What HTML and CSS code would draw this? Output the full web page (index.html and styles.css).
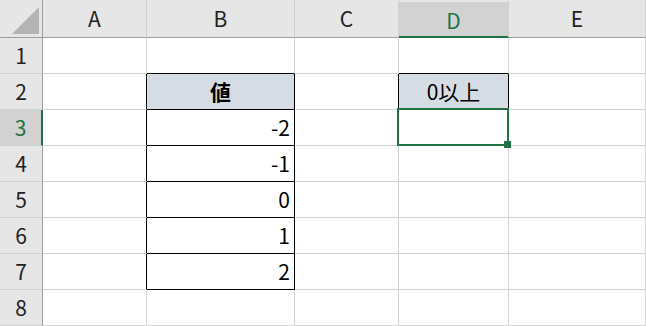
FILE: index.html
```html
<!DOCTYPE html>
<html lang="ja">
<head>
    <meta charset="UTF-8">
    <title>Sheet</title>
    <link rel="stylesheet" href="styles.css">
</head>
<body>
    <div class="sheet">
        <!-- column headers -->
        <div class="hd corner"><span class="tri"></span></div>
        <div class="hd">A</div>
        <div class="hd">B</div>
        <div class="hd">C</div>
        <div class="hd active-col">D</div>
        <div class="hd">E</div>

        <!-- row 1 -->
        <div class="rh">1</div>
        <div class="c"></div>
        <div class="c blk-b"></div>
        <div class="c"></div>
        <div class="c blk-b"></div>
        <div class="c"></div>

        <!-- row 2 -->
        <div class="rh">2</div>
        <div class="c blk-r"></div>
        <div class="c box head bold">値</div>
        <div class="c blk-r"></div>
        <div class="c box head">0以上</div>
        <div class="c"></div>

        <!-- row 3 -->
        <div class="rh active-row">3</div>
        <div class="c blk-r"></div>
        <div class="c box num">-2</div>
        <div class="c"></div>
        <div class="c current"><span class="handle"></span></div>
        <div class="c"></div>

        <!-- row 4 -->
        <div class="rh">4</div>
        <div class="c blk-r"></div>
        <div class="c box num">-1</div>
        <div class="c"></div>
        <div class="c"></div>
        <div class="c"></div>

        <!-- row 5 -->
        <div class="rh">5</div>
        <div class="c blk-r"></div>
        <div class="c box num">0</div>
        <div class="c"></div>
        <div class="c"></div>
        <div class="c"></div>

        <!-- row 6 -->
        <div class="rh">6</div>
        <div class="c blk-r"></div>
        <div class="c box num">1</div>
        <div class="c"></div>
        <div class="c"></div>
        <div class="c"></div>

        <!-- row 7 -->
        <div class="rh">7</div>
        <div class="c blk-r"></div>
        <div class="c box num">2</div>
        <div class="c"></div>
        <div class="c"></div>
        <div class="c"></div>

        <!-- row 8 -->
        <div class="rh">8</div>
        <div class="c"></div>
        <div class="c"></div>
        <div class="c"></div>
        <div class="c"></div>
        <div class="c"></div>
    </div>
</body>
</html>
```

FILE: styles.css
```css
body {
    margin: 0;
    background: #fff;
    font-family: "Noto Sans CJK JP", "Noto Sans", sans-serif;
    font-size: 21px;
    color: #000;
}

.sheet {
    display: grid;
    grid-template-columns: 43px 104px 148px 104px 110px 137px;
    grid-template-rows: 38px repeat(8, 36px);
    width: 646px;
    overflow: hidden;
}

.sheet > div {
    box-sizing: border-box;
    display: flex;
    align-items: center;
    justify-content: center;
    line-height: 1;
}

/* headers */
.hd {
    background: #e6e6e6;
    border-right: 1px solid #d0d0d0;
    border-bottom: 1px solid #9e9e9e;
    color: #222;
}

.hd:last-child {
    border-right-color: #b8b8b8;
}

.corner {
    position: relative;
    border-right: 1px solid #9e9e9e;
}

.tri {
    position: absolute;
    left: 12px;
    top: 7px;
    width: 27px;
    height: 27px;
    background: #b4b4b4;
    clip-path: polygon(100% 0, 100% 100%, 0 100%);
}

.rh {
    background: #e6e6e6;
    border-right: 1px solid #9e9e9e;
    border-bottom: 1px solid #d0d0d0;
    color: #222;
}

.active-col {
    background: #d2d2d2;
    border-top: 2px solid #e6e6e6;
    border-bottom: 2px solid #217346;
    color: #217346;
    padding-top: 2px;
}

.active-row {
    background: #d2d2d2;
    border-right: 2px solid #217346;
    color: #217346;
}

/* cells */
.c {
    border-right: 1px solid #d4d4d4;
    border-bottom: 1px solid #d4d4d4;
}

.blk-r {
    border-right-color: #000;
}

.blk-b {
    border-bottom-color: #000;
}

.box {
    border-right-color: #000;
    border-bottom-color: #000;
}

.head {
    background: #d6dce4;
}

.bold {
    font-weight: bold;
}

.sheet > .num {
    justify-content: flex-end;
    padding-right: 4px;
}

.current {
    position: relative;
}

.current::after {
    content: "";
    position: absolute;
    left: -2px;
    top: -2px;
    right: -1px;
    bottom: -1px;
    border: 2px solid #217346;
}

.handle {
    position: absolute;
    right: -3px;
    bottom: -3px;
    width: 7px;
    height: 7px;
    background: #217346;
    z-index: 1;
}
```
